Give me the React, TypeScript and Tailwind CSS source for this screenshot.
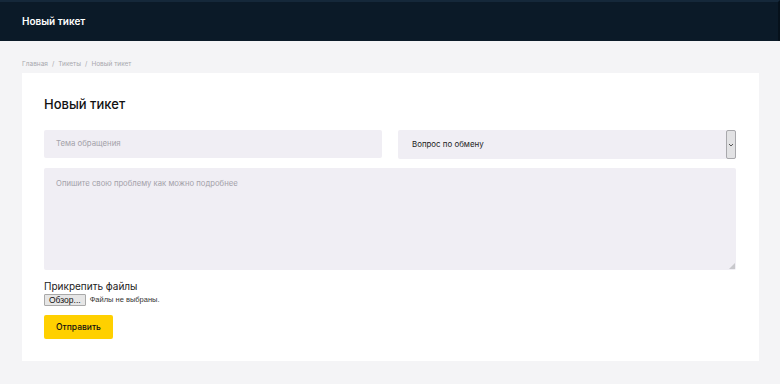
import React from "react";

export default function App() {
  return (
    <div className="min-h-[384px] bg-[#f4f4f6]" style={{ fontFamily: "Inter, 'Noto Sans', sans-serif" }}>
      <header className="h-[41px] bg-[#0b1a28] border-t-2 border-[#15283a] flex items-center px-[22px] border-r-2 border-r-[#06111b]">
        <h1 className="text-white text-[10px] font-semibold">Новый тикет</h1>
      </header>
      <div className="px-[22px] pb-[24px]">
        <nav className="pt-[18px] pb-[4px] text-[6.5px] text-[#a8a8ae] flex gap-[4px] leading-[10px]">
          <span>Главная</span>
          <span>/</span>
          <span>Тикеты</span>
          <span>/</span>
          <span>Новый тикет</span>
        </nav>
        <div className="bg-white w-[737px] px-[22px] pt-[22px] pb-[22px]">
          <h2 className="text-[13px] font-medium text-[#111] leading-[18px]">Новый тикет</h2>
          <div className="mt-[17px] flex gap-[16px]">
            <div className="w-[338px] h-[28px] bg-[#f0eef4] rounded-[2px] flex items-center px-[12px] text-[7.8px] text-[#a3a1a9]">
              Тема обращения
            </div>
            <div className="w-[338px] h-[29px] bg-[#f0eef4] rounded-[2px] flex items-center pl-[14px] text-[7.9px] text-[#222] relative">
              <span className="flex-1">Вопрос по обмену</span>
              <div className="w-[10px] h-[29px] bg-[#e2e2e4] border border-[#a8a8ac] rounded-[2px] flex items-center justify-center">
                <svg width="6" height="4" viewBox="0 0 6 4"><path d="M1 1 L3 3 L5 1" stroke="#555" strokeWidth="1" fill="none" /></svg>
              </div>
            </div>
          </div>
          <div className="mt-[9px] w-[692px] h-[102px] bg-[#f0eef4] rounded-[2px] px-[12px] pt-[10px] text-[7.7px] text-[#a3a1a9] relative">
            Опишите свою проблему как можно подробнее
            <svg className="absolute right-[1px] bottom-[1px]" width="6" height="6" viewBox="0 0 6 6">
              <path d="M6 0 L6 6 L0 6 Z" fill="#c8c8cc" />
            </svg>
          </div>
          <div className="mt-[10px] text-[10px] text-[#222] leading-[12px]">Прикрепить файлы</div>
          <div className="mt-[2px] flex items-center gap-[4px]" style={{ fontFamily: "'Liberation Sans', Arial, sans-serif" }}>
            <div className="h-[12px] px-[4px] bg-[#e6e6e6] border border-[#a9a9a9] rounded-[1px] text-[8.5px] text-[#111] flex items-center leading-none">Обзор...</div>
            <span className="text-[7.5px] text-[#333]">Файлы не выбраны.</span>
          </div>
          <button className="mt-[9px] w-[69px] h-[24px] bg-[#ffd000] rounded-[2px] text-[8.5px] text-[#111] font-medium flex items-center justify-center">
            Отправить
          </button>
        </div>
      </div>
    </div>
  );
}
